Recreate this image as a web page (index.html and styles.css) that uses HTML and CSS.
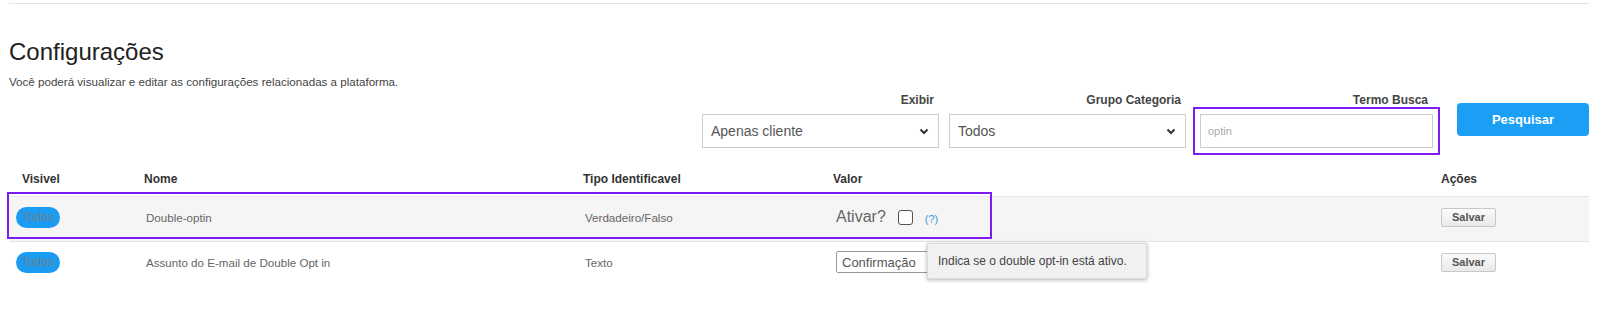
FILE: index.html
```html
<!DOCTYPE html>
<html lang="pt-BR">
  <head>
    <meta charset="UTF-8" />
    <title>Configurações</title>
    <link rel="stylesheet" href="styles.css">
  </head>
  <body>
    <div class="page">
      <div class="top-rule"></div>

      <h1 class="title">Configurações</h1>
      <p class="subtitle">Você poderá visualizar e editar as configurações relacionadas a plataforma.</p>

      <form class="filters" onsubmit="return false;">
        <div class="filter-group">
          <label class="filter-label">Exibir</label>
          <select class="filter-select">
            <option>Apenas cliente</option>
          </select>
        </div>
        <div class="filter-group">
          <label class="filter-label">Grupo Categoria</label>
          <select class="filter-select">
            <option>Todos</option>
          </select>
        </div>
        <div class="filter-group">
          <label class="filter-label">Termo Busca</label>
          <input type="text" class="filter-input" placeholder="optin" />
        </div>
        <button type="submit" class="search-btn">Pesquisar</button>
      </form>

      <div class="table-wrap">
        <table class="config-table">
          <colgroup>
            <col class="col-visible" />
            <col class="col-name" />
            <col class="col-type" />
            <col class="col-value" />
            <col class="col-actions" />
          </colgroup>
          <thead>
            <tr>
              <th>Visivel</th>
              <th>Nome</th>
              <th>Tipo Identificavel</th>
              <th>Valor</th>
              <th>Ações</th>
            </tr>
          </thead>
          <tbody>
            <tr class="row-alt">
              <td class="cell-visible"><span class="pill">Todos</span></td>
              <td>Double-optin</td>
              <td>Verdadeiro/Falso</td>
              <td>
                <div class="value-check">
                  <span class="check-label">Ativar?</span>
                  <span class="checkbox"></span>
                  <span class="help">(?)</span>
                </div>
              </td>
              <td class="cell-actions"><button class="save-btn">Salvar</button></td>
            </tr>
            <tr>
              <td class="cell-visible"><span class="pill">Todos</span></td>
              <td>Assunto do E-mail de Double Opt in</td>
              <td>Texto</td>
              <td><input type="text" class="value-input" value="Confirmação" /></td>
              <td class="cell-actions"><button class="save-btn">Salvar</button></td>
            </tr>
          </tbody>
        </table>

        <div class="row-highlight"></div>
        <div class="tooltip">Indica se o double opt-in está ativo.</div>
      </div>
    </div>
  </body>
</html>
```

FILE: styles.css
```css
body {
  margin: 0;
  background: #fff;
  font-family: "Liberation Sans", Arial, sans-serif;
  color: #333;
}

.page {
  margin-left: 9px;
  width: 1580px;
}

.top-rule {
  margin-top: 3px;
  border-top: 1px solid #e3e3e3;
}

.title {
  margin: 34px 0 0;
  font-size: 24px;
  line-height: 28px;
  font-weight: normal;
  color: #222;
}

.subtitle {
  margin: 9px 0 0;
  font-size: 11.6px;
  line-height: 14px;
  color: #444;
}

.filters {
  display: flex;
  justify-content: flex-end;
  align-items: flex-start;
  gap: 10px;
  margin-top: 3px;
}

.filter-group {
  display: flex;
  flex-direction: column;
  align-items: flex-end;
  gap: 6px;
}

.filter-group:nth-child(3) {
  margin-left: 4px;
}

.filter-label {
  padding-right: 5px;
  font-size: 12px;
  line-height: 16px;
  font-weight: bold;
  color: #444;
}

.filter-select {
  appearance: none;
  -webkit-appearance: none;
  box-sizing: border-box;
  width: 237px;
  height: 34px;
  padding: 0 8px;
  border: 1px solid #ccc;
  border-radius: 0;
  background: #fff url("data:image/svg+xml;utf8,<svg xmlns='http://www.w3.org/2000/svg' width='10' height='7' viewBox='0 0 10 7'><path d='M1.5 1.5 L5 5 L8.5 1.5' fill='none' stroke='%23333' stroke-width='2'/></svg>") no-repeat right 9px center;
  font-family: inherit;
  font-size: 14px;
  color: #555;
}

.filter-input {
  box-sizing: border-box;
  width: 233px;
  height: 34px;
  padding: 0 7px;
  border: 1px solid #ccc;
  font-family: inherit;
  font-size: 11px;
  color: #555;
  outline: 2px solid #7b1cf0;
  outline-offset: 5px;
}

.filter-input::placeholder {
  color: #aaa;
}

.search-btn {
  width: 132px;
  height: 33px;
  margin-top: 11px;
  margin-left: 14px;
  border: none;
  border-radius: 4px;
  background: #1a9ff4;
  color: #fff;
  font-family: inherit;
  font-size: 13px;
  font-weight: bold;
  cursor: pointer;
}

.table-wrap {
  position: relative;
  margin-top: 17px;
}

.config-table {
  width: 100%;
  border-collapse: collapse;
  table-layout: fixed;
}

.col-visible { width: 122px; }
.col-name { width: 439px; }
.col-type { width: 250px; }
.col-value { width: 608px; }
.col-actions { width: 161px; }

.config-table th {
  padding: 6px 13px 9px 13px;
  text-align: left;
  font-size: 12px;
  line-height: 16px;
  font-weight: bold;
  color: #333;
}

.config-table td {
  height: 40px;
  padding: 0 13px 4px 15px;
  font-size: 11.6px;
  color: #666;
  vertical-align: middle;
}

.config-table tbody tr {
  border-top: 1px solid #e6e6e6;
}

.row-alt {
  background: #f5f5f5;
}

.config-table td.cell-visible {
  padding-left: 7px;
}

.config-table td.cell-actions {
  padding-left: 13px;
}

.pill {
  display: inline-block;
  width: 44px;
  height: 21px;
  border-radius: 11px;
  background: #1a9cf2;
  color: #6f7f8c;
  font-size: 12px;
  line-height: 21px;
  text-align: center;
}

.value-check {
  display: flex;
  align-items: center;
  padding-left: 1px;
}

.check-label {
  font-size: 16px;
  color: #666;
}

.checkbox {
  box-sizing: border-box;
  width: 15px;
  height: 15px;
  margin-left: 12px;
  border: 1px solid #555;
  border-radius: 3px;
  background: #fff;
}

.help {
  margin-left: 12px;
  padding-top: 3px;
  font-size: 11px;
  color: #3f9ad8;
}

.value-input {
  box-sizing: border-box;
  width: 150px;
  height: 22px;
  margin-left: 1px;
  padding: 0 5px;
  border: 1px solid #999;
  border-radius: 2px;
  font-family: inherit;
  font-size: 13px;
  color: #555;
}

.save-btn {
  box-sizing: border-box;
  width: 55px;
  height: 19px;
  padding: 0;
  border: 1px solid #c8c8c8;
  border-radius: 2px;
  background: linear-gradient(#fbfbfb, #e9e9e9);
  font-family: inherit;
  font-size: 11px;
  font-weight: bold;
  color: #555;
}

.row-highlight {
  position: absolute;
  left: -2px;
  top: 27px;
  width: 985px;
  height: 47px;
  box-sizing: border-box;
  border: 2px solid #7b1cf0;
  pointer-events: none;
}

.tooltip {
  position: absolute;
  left: 918px;
  top: 78px;
  box-sizing: border-box;
  width: 220px;
  height: 36px;
  padding-left: 10px;
  border: 1px solid #dcdcdc;
  background: #f1f1f1;
  box-shadow: 0 1px 4px rgba(0, 0, 0, 0.3);
  font-size: 12px;
  line-height: 34px;
  color: #444;
}
```
